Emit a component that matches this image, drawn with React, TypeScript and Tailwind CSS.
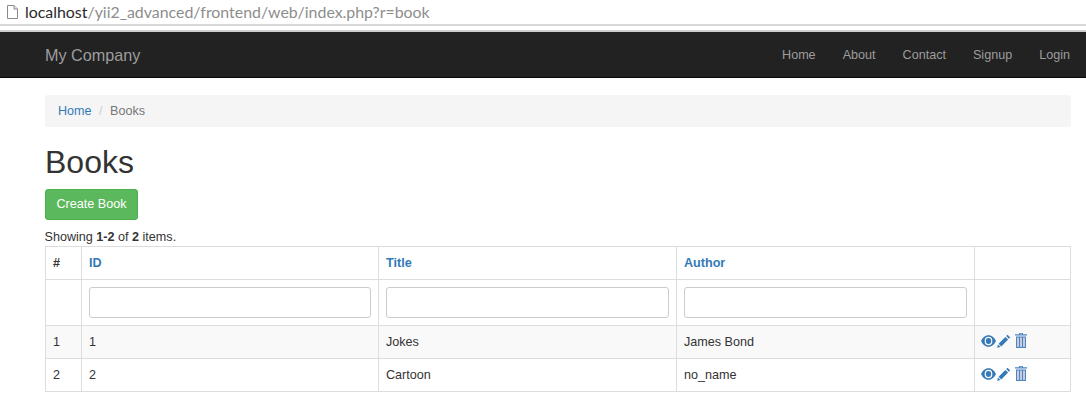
const FONT = "font-['Liberation_Sans',Arial,sans-serif]"

const NAV = ['Home', 'About', 'Contact', 'Signup', 'Login']

const ROWS = [
  { n: 1, id: 1, title: 'Jokes', author: 'James Bond', bg: 'bg-[#f9f9f9]' },
  { n: 2, id: 2, title: 'Cartoon', author: 'no_name', bg: 'bg-white' },
]

function PageIcon() {
  return (
    <svg width="13" height="16" viewBox="0 0 13 16" className="shrink-0">
      <path d="M1.5 1.5h6.500l3.500 3.500v9.500h-10z" fill="#fff" stroke="#8a8a8a" />
      <path d="M8 1.500v3.500h3.500" fill="#e4e4e4" stroke="#8a8a8a" />
    </svg>
  )
}

function EyeIcon() {
  return (
    <svg width="15" height="12" viewBox="0 1 14 10" preserveAspectRatio="none" className="shrink-0">
      <path
        fillRule="evenodd"
        fill="#337ab7"
        d="M7 1.200C3.800 1.200 1.300 3.500 0 6c1.300 2.500 3.800 4.800 7 4.800s5.700-2.300 7-4.800C12.700 3.500 10.200 1.200 7 1.200zM7 2.400a3.600 3.600 0 1 1 0 7.200a3.600 3.600 0 0 1 0-7.200zM7 3.500a2.500 2.500 0 1 0 0 5a2.500 2.500 0 0 0 0-5z"
      />
    </svg>
  )
}

function PencilIcon() {
  return (
    <svg width="14" height="14" viewBox="0 0 14 14" className="shrink-0">
      <path fill="#337ab7" d="M10.500.8l2.700 2.700-1.300 1.300-2.700-2.700zM8.400 2.900l2.700 2.700-6.800 6.800-2.700-2.700zM1 10.400l2.600 2.600-3.400.8z" />
    </svg>
  )
}

function TrashIcon() {
  return (
    <svg width="12" height="15" viewBox="0 0 12 15" className="shrink-0 ml-[3px]">
      <path fill="#4a86c0" d="M4 0h4v1.200h4v1.300H0V1.200h4zM5 .7v.5h2V.7z" />
      <path
        fillRule="evenodd"
        fill="#4a86c0"
        d="M1 3.500h10V15H1zM2.200 4.800v9h1.600v-9zM5.200 4.800v9h1.600v-9zM8.200 4.800v9h1.600v-9z"
      />
      <path fill="#c9c3da" d="M2.200 4.800h1.600v9H2.200zM5.200 4.800h1.600v9H5.200zM8.200 4.800h1.600v9H8.200z" />
    </svg>
  )
}

function FilterInput() {
  return <input className="block w-full h-[31px] rounded-[3px] border border-[#ccc] bg-white" />
}

export default function App() {
  return (
    <div className={`${FONT} w-[1086px] h-[410px] overflow-hidden bg-white text-[12.6px] text-[#333]`}>
      <div className="flex items-center gap-[6px] h-[26px] pl-[6px] border-b-2 border-[#d9d8d6] bg-white">
        <PageIcon />
        <div className="font-['Lato',sans-serif] text-[15.9px] leading-[22px] text-[#8d8d8d]">
          <span className="text-[#2a2a2a]">localhost</span>/yii2_advanced/frontend/web/index.php?r=book
        </div>
      </div>
      <div className="h-[4px] bg-white" />
      <div className="h-[2px] bg-[#cfcfcf]" />

      <nav className="flex items-center justify-between h-[46px] pl-[45px] pr-[16px] pt-[1px] bg-[#222] border-b border-[#080808]">
        <span className="text-[16.2px] text-[#9d9d9d]">My Company</span>
        <div className="flex gap-[27px] text-[12.6px] text-[#9d9d9d]">
          {NAV.map(item => (
            <span key={item}>{item}</span>
          ))}
        </div>
      </nav>

      <main className="pl-[45px] pr-[15px] pt-[17px]">
        <div className="flex items-center h-[32px] px-[13px] rounded-[3px] bg-[#f5f5f5]">
          <span className="text-[#337ab7]">Home</span>
          <span className="px-[7.5px] text-[#ccc]">/</span>
          <span className="text-[#777]">Books</span>
        </div>

        <h1 className="mt-[17px] text-[32px] leading-[36px] font-normal">Books</h1>

        <button className="block mt-[9px] h-[31px] px-[10.5px] pb-[1px] rounded-[3px] border border-[#4cae4c] bg-[#5cb85c] text-[12.6px] text-white">
          Create Book
        </button>

        <div className="mt-[9px] h-[17px] leading-[16px] -ml-[0.5px]">
          Showing <b>1-2</b> of <b>2</b> items.
        </div>

        <table className="w-[1025px] table-fixed border-collapse">
          <colgroup>
            <col className="w-[36px]" />
            <col className="w-[297px]" />
            <col className="w-[298px]" />
            <col className="w-[298px]" />
            <col className="w-[96px]" />
          </colgroup>
          <thead>
            <tr className="h-[33px]">
              <th className="border border-[#ddd] px-[7px] text-left font-bold">#</th>
              <th className="border border-[#ddd] px-[7px] text-left font-bold text-[#337ab7]">ID</th>
              <th className="border border-[#ddd] px-[7px] text-left font-bold text-[#337ab7]">Title</th>
              <th className="border border-[#ddd] px-[7px] text-left font-bold text-[#337ab7]">Author</th>
              <th className="border border-[#ddd]" />
            </tr>
            <tr className="h-[46px]">
              <td className="border border-[#ddd]" />
              <td className="border border-[#ddd] px-[7px]"><FilterInput /></td>
              <td className="border border-[#ddd] px-[7px]"><FilterInput /></td>
              <td className="border border-[#ddd] px-[7px]"><FilterInput /></td>
              <td className="border border-[#ddd]" />
            </tr>
          </thead>
          <tbody>
            {ROWS.map(row => (
              <tr key={row.n} className={`h-[33px] ${row.bg}`}>
                <td className="border border-[#ddd] px-[7px]">{row.n}</td>
                <td className="border border-[#ddd] px-[7px]">{row.id}</td>
                <td className="border border-[#ddd] px-[7px]">{row.title}</td>
                <td className="border border-[#ddd] px-[7px]">{row.author}</td>
                <td className="border border-[#ddd] pl-[6px]">
                  <div className="flex items-center gap-[1px] -mt-[3px]">
                    <EyeIcon />
                    <PencilIcon />
                    <TrashIcon />
                  </div>
                </td>
              </tr>
            ))}
          </tbody>
        </table>
      </main>
    </div>
  )
}
